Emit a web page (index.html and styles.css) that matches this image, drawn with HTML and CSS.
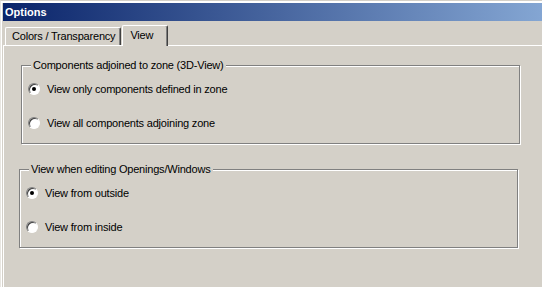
FILE: index.html
```html
<!DOCTYPE html>
<html lang="en">
<head>
<meta charset="UTF-8">
<meta name="viewport" content="width=device-width, initial-scale=1.0">
<title>Options</title>
<link rel="stylesheet" href="styles.css">
</head>
<body>

<div class="window">
  <div class="frame">
    <div class="titlebar">Options</div>

    <div class="tabs">
      <div class="tab">Colors / Transparency</div>
      <div class="tab active">View</div>
    </div>

    <div class="panel">
      <fieldset class="group">
        <legend>Components adjoined to zone (3D-View)</legend>
        <label class="option"><span class="radio checked"></span>View only components defined in zone</label>
        <label class="option"><span class="radio"></span>View all components adjoining zone</label>
      </fieldset>

      <fieldset class="group group-lower">
        <legend>View when editing Openings/Windows</legend>
        <label class="option"><span class="radio checked"></span>View from outside</label>
        <label class="option"><span class="radio"></span>View from inside</label>
      </fieldset>
    </div>
  </div>
</div>

</body>
</html>
```

FILE: styles.css
```css
html, body {
  height: 100%;
}
body {
  margin: 0;
  overflow: hidden;
  background-color: #d4d0c8;
  font-family: "Liberation Sans", Arial, sans-serif;
  font-size: 11px;
  letter-spacing: -0.2px;
  color: #000;
}
.window {
  height: 100%;
  box-sizing: border-box;
  border-top: 1px solid #d4d0c8;
  border-left: 1px solid #e8e6e1;
}
.frame {
  height: 100%;
  box-sizing: border-box;
  display: flex;
  flex-direction: column;
  border-top: 2px solid #fff;
  border-left: 1px solid #fff;
}
.titlebar {
  height: 18px;
  line-height: 18px;
  margin-left: 1px;
  padding-left: 2px;
  color: #fff;
  font-weight: bold;
  letter-spacing: 0;
  background: linear-gradient(90deg, #0a246a 0, #a6caf0 690px);
}
.tabs {
  display: flex;
  align-items: flex-end;
  margin-top: 4px;
  padding-left: 3px;
  position: relative;
  z-index: 1;
}
.tab {
  height: 17px;
  line-height: 17px;
  padding: 0 5px 0 6px;
  border-top: 1px solid #fff;
  border-left: 1px solid #fff;
  border-right: 1px solid #404040;
  border-top-left-radius: 2px;
  border-top-right-radius: 2px;
  box-shadow: inset -1px 0 #808080;
}
.tab.active {
  height: 20px;
  line-height: 18px;
  margin-left: 1px;
  margin-bottom: -1px;
  padding: 0 14px 0 7px;
  background-color: #d4d0c8;
}
.panel {
  flex: 1;
  padding-top: 13px;
  border-top: 1px solid #fff;
  border-left: 1px solid #fff;
  margin-left: 1px;
}
.group {
  width: 499px;
  box-sizing: border-box;
  margin: 0 0 19px 17px;
  padding: 9px 0 12px 6px;
  border: 1px solid #808080;
  box-shadow: 1px 1px 0 #fff, inset 1px 1px 0 #fff;
}
.group-lower {
  margin-left: 15px;
}
.group legend {
  line-height: 13px;
  margin-left: 3px;
  padding: 0 2px;
  background-color: #d4d0c8;
}
.option {
  display: flex;
  align-items: center;
  height: 16px;
}
.option + .option {
  margin-top: 18px;
}
.radio {
  position: relative;
  width: 10px;
  height: 10px;
  margin-right: 7px;
  border-radius: 50%;
  border: 1px solid;
  border-color: #808080 #fff #fff #808080;
  background-color: #fff;
  box-shadow: inset 1px 1px 0 #404040;
}
.radio.checked::after {
  content: "";
  position: absolute;
  left: 3px;
  top: 3px;
  width: 4px;
  height: 4px;
  border-radius: 50%;
  background-color: #000;
}
```
